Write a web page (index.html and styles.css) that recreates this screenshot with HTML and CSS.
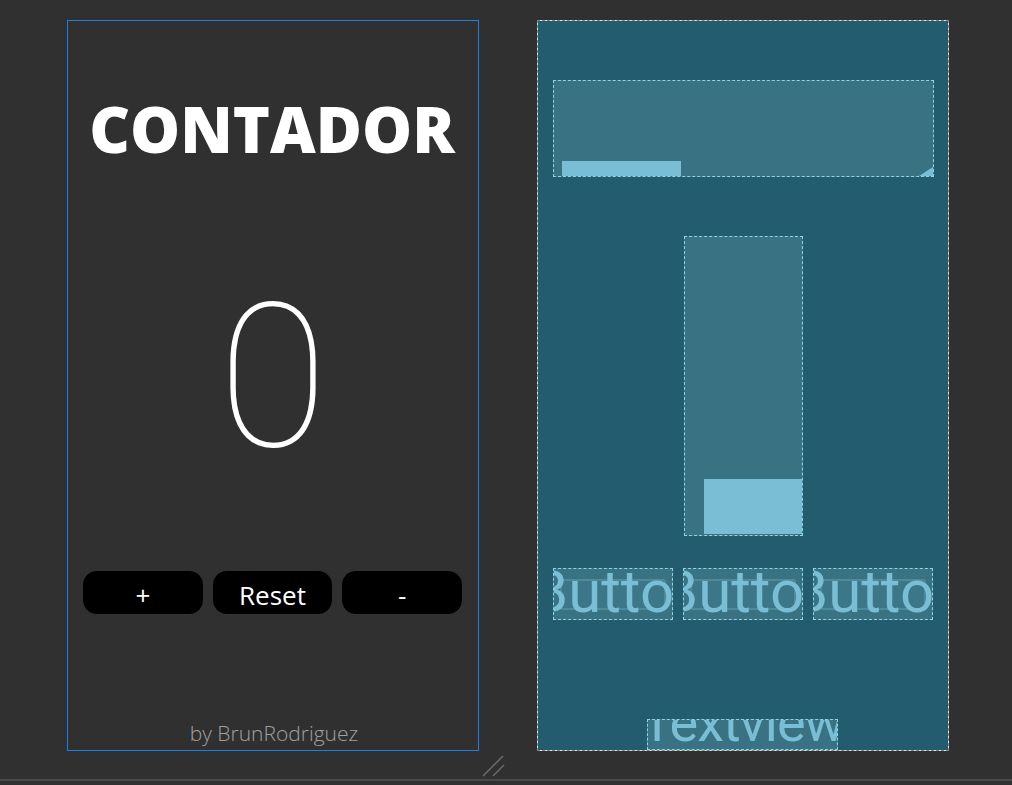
FILE: index.html
```html
<!DOCTYPE html>
<html lang="es">
<head>
<meta charset="utf-8">
<title>Contador</title>
<link rel="stylesheet" href="styles.css">
</head>
<body>
<div class="stage">
  <div class="phone design">
    <div class="title">CONTADOR</div>
    <div class="count-area"><span class="count">0</span></div>
    <div class="btn-row">
      <button class="btn">+</button>
      <button class="btn">Reset</button>
      <button class="btn">-</button>
    </div>
    <div class="footer">by BrunRodriguez</div>
  </div>
  <div class="phone blueprint">
    <div class="bp-box bp-title">
      <span class="bp-fill bp-title-fill"></span>
      <span class="bp-corner"></span>
    </div>
    <div class="bp-box bp-count">
      <span class="bp-fill bp-count-fill"></span>
    </div>
    <div class="bp-row">
      <div class="bp-box bp-btn"><span class="bp-btn-bg"></span><span class="bp-btn-text">Button</span></div>
      <div class="bp-box bp-btn"><span class="bp-btn-bg"></span><span class="bp-btn-text">Button</span></div>
      <div class="bp-box bp-btn"><span class="bp-btn-bg"></span><span class="bp-btn-text">Button</span></div>
    </div>
    <div class="bp-box bp-textview"><span class="bp-tv-text">Textview</span></div>
  </div>
</div>
<div class="bottom-bar">
  <svg class="resize" width="24" height="24" viewBox="0 0 24 24">
    <line x1="2" y1="21" x2="22" y2="1" stroke="#6b6b6b" stroke-width="1.5"/>
    <line x1="12" y1="21" x2="23" y2="10" stroke="#6b6b6b" stroke-width="1.5"/>
  </svg>
</div>
</body>
</html>
```
FILE: styles.css
```css
html, body {
  margin: 0;
  padding: 0;
}
body {
  width: 1012px;
  height: 785px;
  overflow: hidden;
  background: #303031;
  font-family: "Open Sans", "DejaVu Sans", sans-serif;
}
.stage {
  height: 781px;
  box-sizing: border-box;
  padding: 20px 0 0 67px;
  display: flex;
  gap: 58px;
  border-bottom: 2px solid #4a4a4b;
  position: relative;
}
.bottom-bar {
  height: 2px;
}
.resize {
  position: absolute;
  left: 481px;
  top: 755px;
}
.phone {
  width: 412px;
  height: 731px;
  box-sizing: border-box;
  display: flex;
  flex-direction: column;
}
.design {
  border: 1px solid #1d7fe4;
  background: #303031;
}
.title {
  margin-top: 59px;
  height: 96px;
  display: flex;
  align-items: center;
  justify-content: center;
  color: #ffffff;
  font-weight: 800;
  font-size: 63px;
  line-height: 1;
  letter-spacing: 0px;
  padding-right: 2px;
}
.count-area {
  margin-top: 60px;
  height: 300px;
  box-sizing: border-box;
  padding-bottom: 16px;
  display: flex;
  align-items: center;
  justify-content: center;
}
.count {
  font-family: "Roboto", "Open Sans", sans-serif;
  font-weight: 100;
  font-size: 200px;
  line-height: 1;
  color: #ffffff;
}
.btn-row {
  margin-top: 35px;
  padding: 0 16px 0 15px;
  display: flex;
  gap: 10px;
}
.btn {
  width: 120px;
  height: 43px;
  border: none;
  border-radius: 14px;
  background: #000000;
  color: #ffffff;
  font-family: "Open Sans", sans-serif;
  font-size: 26px;
  line-height: 1;
  padding: 4px 0 0;
  display: flex;
  align-items: center;
  justify-content: center;
}
.footer {
  margin-top: auto;
  height: 31px;
  box-sizing: border-box;
  padding: 0 0 4px 2px;
  display: flex;
  align-items: center;
  justify-content: center;
  color: #a0a0a0;
  font-weight: 300;
  font-size: 21px;
}

/* blueprint */
.blueprint {
  background: #235c6e;
  border: 1px solid #e6e6e6;
  outline: 1px dashed #8a8a8a;
  outline-offset: -1px;
}
.bp-box {
  box-sizing: border-box;
  border: 1px dashed #8fd3e6;
  background: #387283;
  position: relative;
  overflow: hidden;
}
.bp-fill {
  position: absolute;
  background: #79bed4;
}
.bp-title {
  margin: 59px 14px 0 15px;
  height: 97px;
}
.bp-title-fill {
  left: 8px;
  bottom: 0;
  width: 119px;
  height: 15px;
}
.bp-corner {
  position: absolute;
  right: 0;
  bottom: 0;
  width: 14px;
  height: 9px;
  background: #79bed4;
  clip-path: polygon(100% 0, 100% 100%, 0 100%);
}
.bp-count {
  margin: 59px 0 0 146px;
  width: 119px;
  height: 300px;
}
.bp-count-fill {
  left: 19px;
  bottom: 1px;
  width: 98px;
  height: 55px;
}
.bp-row {
  margin: 32px 0 0 15px;
  display: flex;
  gap: 10px;
}
.bp-btn {
  width: 120px;
  height: 52px;
  display: flex;
  align-items: center;
  justify-content: center;
}
.bp-btn-bg {
  position: absolute;
  left: 6px;
  right: 6px;
  top: 10px;
  bottom: 9px;
  border: 2px solid #4d8a9a;
  border-radius: 3px;
  background: #3b7788;
}
.bp-btn-text {
  position: relative;
  font-family: "Roboto", "Open Sans", sans-serif;
  font-size: 60px;
  line-height: 1;
  color: #79bed4;
  margin-top: -4px;
  margin-left: 12px;
}
.bp-textview {
  margin: auto 0 0 109px;
  width: 191px;
  height: 31px;
  display: flex;
  justify-content: center;
}
.bp-tv-text {
  font-family: "Roboto", "Open Sans", sans-serif;
  font-size: 54px;
  line-height: 1;
  color: #79bed4;
  margin-top: -24px;
  letter-spacing: -1px;
}
```
